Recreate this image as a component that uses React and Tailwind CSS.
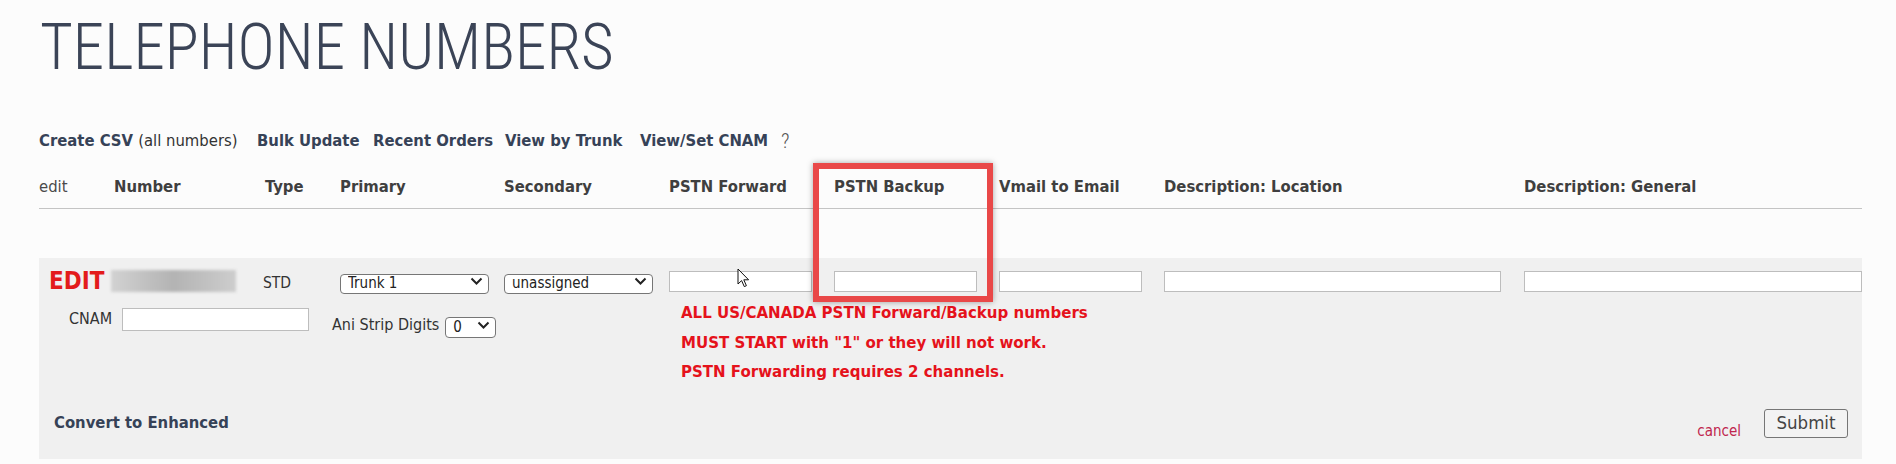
import React from 'react';

const font = "font-['DejaVu_Sans_Condensed','DejaVu_Sans',sans-serif] font-stretch-condensed";
const cols = 'grid grid-cols-[75px_151px_75px_164px_165px_165px_165px_165px_360px_338px]';

const Chevron = () => (
  <svg
    width="13"
    height="8"
    viewBox="0 0 13 8"
    className="pointer-events-none absolute right-[6px] top-1/2 -translate-y-1/2"
  >
    <polyline points="1.5,1.5 6.5,6.5 11.5,1.5" fill="none" stroke="#222" strokeWidth="2" />
  </svg>
);

const Select = ({ value, options, className = '' }) => (
  <div className={`relative ${className}`}>
    <select
      defaultValue={value}
      className="h-full w-full appearance-none rounded-[4px] border border-[#767676] bg-white pl-[7px] text-[15px] leading-none text-[#222] outline-none"
    >
      {options.map((opt) => (
        <option key={opt}>{opt}</option>
      ))}
    </select>
    <Chevron />
  </div>
);

const TextInput = ({ className = '' }) => (
  <input type="text" className={`h-[21px] border border-[#bdbdbd] bg-white outline-none ${className}`} />
);

const Cursor = () => (
  <svg width="13" height="20" viewBox="0 0 13 20" className="absolute left-[737px] top-[268px] z-20">
    <path
      d="M1 1 L1 16 L4.6 12.6 L7.3 18.6 L9.4 17.7 L6.8 11.8 L11.6 11.8 Z"
      fill="#fff"
      stroke="#111"
      strokeWidth="1"
      strokeLinejoin="round"
    />
  </svg>
);

const headers = [
  { label: 'edit', bold: false },
  { label: 'Number', bold: true },
  { label: 'Type', bold: true },
  { label: 'Primary', bold: true },
  { label: 'Secondary', bold: true },
  { label: 'PSTN Forward', bold: true },
  { label: 'PSTN Backup', bold: true },
  { label: 'Vmail to Email', bold: true },
  { label: 'Description: Location', bold: true },
  { label: 'Description: General', bold: true },
];

const notes = [
  'ALL US/CANADA PSTN Forward/Backup numbers',
  'MUST START with "1" or they will not work.',
  'PSTN Forwarding requires 2 channels.',
];

export default function App() {
  return (
    <div className={`relative min-h-[464px] overflow-hidden bg-[#fcfcfc] ${font}`}>
      <h1 className="ml-[40px] origin-left scale-x-[0.97] whitespace-nowrap pt-[15px] font-['Roboto',sans-serif] text-[65px] font-light leading-none text-[#3b4457]">
        TELEPHONE NUMBERS
      </h1>

      <div className="ml-[39px] mt-[51px] flex text-[16.5px] font-bold leading-[20px] text-[#364257]">
        <span className="w-[218px]">
          Create CSV <span className="font-normal text-[#333]">(all numbers)</span>
        </span>
        <span className="w-[116px]">Bulk Update</span>
        <span className="w-[132px]">Recent Orders</span>
        <span className="w-[135px]">View by Trunk</span>
        <span className="w-[141px]">View/Set CNAM</span>
        <span className="font-['Roboto',sans-serif] text-[21px] font-light leading-[20px] text-[#555]">?</span>
      </div>

      <div className={`${cols} ml-[39px] mt-[26px] w-[1823px] border-b border-[#c4c4c4] pb-[11px] text-[16.5px] leading-[20px] text-[#3f3f3f]`}>
        {headers.map((h) => (
          <div key={h.label} className={h.bold ? 'font-bold' : 'font-normal text-[#4a4a4a]'}>
            {h.label}
          </div>
        ))}
      </div>

      <div className="ml-[39px] mt-[49px] w-[1823px] bg-[#f0f0f0] pb-[21px] pt-[12px]">
        <div className={`${cols} h-[22px] items-center`}>
          <div className="pl-[10px] text-[24px] font-bold leading-[22px] text-[#e31b1b]">EDIT</div>
          <div className="-ml-[3px] h-[22px] w-[125px] bg-gradient-to-r from-[#d2d2d2] via-[#b3b3b3] to-[#cdcdcd] blur-[1.5px]" />
          <div className="-ml-[2px] translate-y-[2px] text-[15.5px] leading-[20px] text-[#333]">STD</div>
          <Select value="Trunk 1" options={['Trunk 1', 'Trunk 2']} className="h-[20px] w-[149px]" />
          <Select value="unassigned" options={['unassigned', 'Trunk 1']} className="h-[20px] w-[149px]" />
          <TextInput className="w-[143px]" />
          <TextInput className="w-[143px]" />
          <TextInput className="w-[143px]" />
          <TextInput className="w-[337px]" />
          <TextInput className="w-[338px]" />
        </div>

        <div className="mt-[6px] flex items-start">
          <div className="mt-[9px] flex w-[293px] items-center pl-[30px]">
            <span className="text-[16px] text-[#333]">CNAM</span>
            <TextInput className="ml-[10px] h-[23px] w-[187px]" />
          </div>
          <div className="mt-[15px] flex w-[349px] items-center">
            <span className="text-[16px] text-[#333]">Ani Strip Digits</span>
            <Select value="0" options={['0', '1', '2']} className="ml-[6px] h-[21px] w-[51px]" />
          </div>
          <div className="text-[16.7px] font-bold leading-[29.5px] text-[#e5121b]">
            {notes.map((n) => (
              <p key={n}>{n}</p>
            ))}
          </div>
        </div>

        <div className="mt-[22px] flex h-[29px] items-center justify-between pl-[15px] pr-[14px]">
          <span className="text-[16.5px] font-bold text-[#364257]">Convert to Enhanced</span>
          <div className="flex items-end">
            <span className="-mb-[2px] mr-[23px] text-[15px] leading-[17px] text-[#c0264e]">cancel</span>
            <button
              type="button"
              className="h-[29px] w-[84px] rounded-[3px] border border-[#767676] bg-[#f3f3f3] text-[18.5px] leading-none text-[#444]"
            >
              Submit
            </button>
          </div>
        </div>
      </div>

      <div className="pointer-events-none absolute left-[813px] top-[163px] z-10 h-[139px] w-[180px] border-[6px] border-[#e94848] shadow-[0_0_6px_rgba(0,0,0,0.35)]" />
      <Cursor />
    </div>
  );
}
